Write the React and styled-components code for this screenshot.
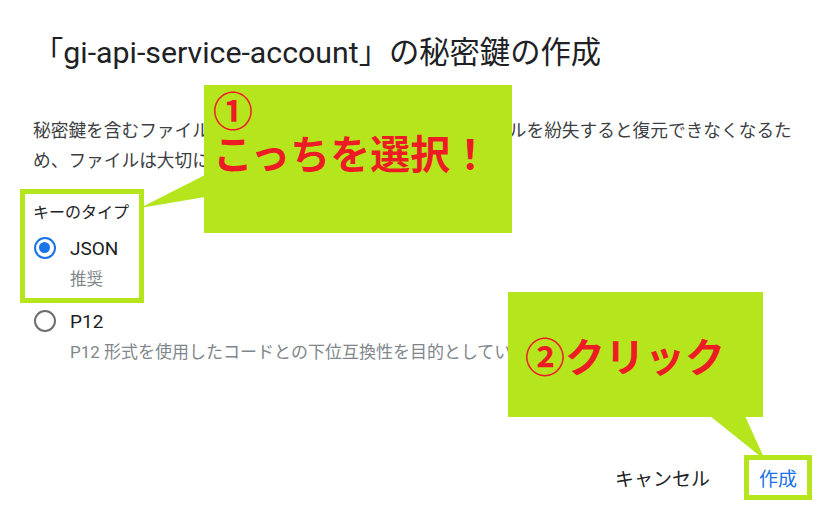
import React from "react";
import styled, { createGlobalStyle, css } from "styled-components";

const LIME = "#b5e61d";
const RED = "#ed1c24";

const GlobalStyle = createGlobalStyle`
  html, body { margin: 0; padding: 0; background: #fff; }
  body { font-family: Roboto, "Noto Sans CJK JP", sans-serif; }
`;

const Page = styled.div`
  position: relative;
  width: 834px;
  height: 529px;
  overflow: hidden;
  box-sizing: border-box;
  padding: 34px 27px 34px 33px;
  display: flex;
  flex-direction: column;
`;

const Title = styled.h2`
  margin: 0;
  font-size: 30.3px;
  font-weight: 400;
  line-height: 37px;
  color: #202124;
  white-space: nowrap;
`;

const Body = styled.p`
  margin: 45px 0 0;
  width: 770px;
  font-size: 17.7px;
  line-height: 30px;
  color: #3c4043;
`;

const Legend = styled.div`
  margin-top: 25px;
  font-size: 16px;
  line-height: 24px;
  color: #202124;
`;

const Option = styled.label`
  display: flex;
  align-items: center;
  gap: 14px;
  height: 24px;
  margin-top: ${(p) => p.$top}px;
`;

const Radio = styled.span`
  position: relative;
  width: 22px;
  height: 22px;
  margin-left: 1px;
  box-sizing: border-box;
  border-radius: 50%;
  border: 2.5px solid ${(p) => (p.$checked ? "#1a73e8" : "#6e6e6e")};
  ${(p) =>
    p.$checked &&
    css`
      &::after {
        content: "";
        position: absolute;
        left: 3px;
        top: 3px;
        width: 11px;
        height: 11px;
        border-radius: 50%;
        background: #1a73e8;
      }
    `}
`;

const OptionLabel = styled.span`
  font-size: 19px;
  color: #202124;
`;

const Hint = styled.div`
  margin: ${(p) => p.$top}px 0 0 37px;
  font-size: ${(p) => p.$size}px;
  line-height: 22px;
  color: #80868b;
  white-space: nowrap;
`;

const Actions = styled.div`
  margin-top: auto;
  display: flex;
  justify-content: flex-end;
  align-items: center;
  gap: 29px;
`;

const Button = styled.button`
  height: 35px;
  padding: 0 10px;
  border: none;
  background: #fff;
  font-family: inherit;
  font-size: 19px;
  color: ${(p) => (p.$primary ? "#1a73e8" : "#202124")};
  ${(p) =>
    p.$highlight &&
    css`
      outline: 5px solid ${LIME};
    `}
`;

const HighlightBox = styled.div`
  position: absolute;
  left: 20px;
  top: 189px;
  width: 124px;
  height: 114px;
  box-sizing: border-box;
  border: 5px solid ${LIME};
`;

const Callout = styled.div`
  position: absolute;
  left: ${(p) => p.$x}px;
  top: ${(p) => p.$y}px;
  width: ${(p) => p.$w}px;
  height: ${(p) => p.$h}px;
  box-sizing: border-box;
  padding: ${(p) => p.$pad};
  background: ${LIME};
  color: ${RED};
  font-family: "Noto Sans CJK JP", sans-serif;
  font-weight: 700;
  font-size: 40px;
  line-height: 43px;
  white-space: nowrap;
`;

const Tails = styled.svg`
  position: absolute;
  left: 0;
  top: 0;
  pointer-events: none;
`;

export default function App() {
  return (
    <>
      <GlobalStyle />
      <Page>
        <Title>「gi-api-service-account」の秘密鍵の作成</Title>
        <Body>
          秘密鍵を含むファイルがダウンロードされます。このファイルを紛失すると復元できなくなるため、ファイルは大切に保管してください。
        </Body>
        <Legend>キーのタイプ</Legend>
        <Option $top={11}>
          <Radio $checked />
          <OptionLabel>JSON</OptionLabel>
        </Option>
        <Hint $top={9} $size={16.5}>推奨</Hint>
        <Option $top={18}>
          <Radio />
          <OptionLabel>P12</OptionLabel>
        </Option>
        <Hint $top={8} $size={17}>P12 形式を使用したコードとの下位互換性を目的としています</Hint>
        <Actions>
          <Button>キャンセル</Button>
          <Button $primary $highlight>作成</Button>
        </Actions>

        <HighlightBox />
        <Tails width="834" height="529" viewBox="0 0 834 529">
          <polygon points="205,175 205,197 140,208" fill={LIME} />
          <polygon points="710,416 745,416 765,460" fill={LIME} />
        </Tails>
        <Callout $x={204} $y={85} $w={308} $h={148} $pad="3px 0 0 9px">
          ①
          <br />
          こっちを選択！
        </Callout>
        <Callout $x={508} $y={292} $w={255} $h={125} $pad="42px 0 0 17px">
          ②クリック
        </Callout>
      </Page>
    </>
  );
}
